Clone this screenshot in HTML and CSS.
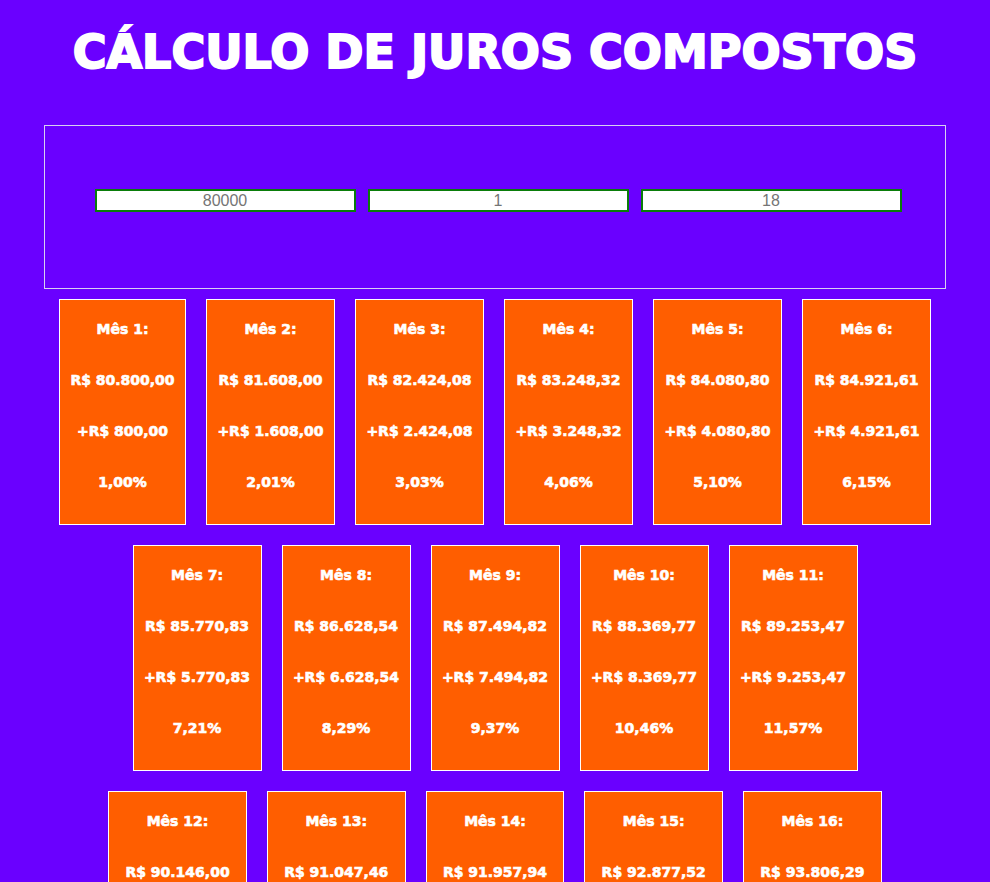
FILE: index.html
```html
<!DOCTYPE html>
<html lang="pt-BR">
<head>
<meta charset="utf-8">
<title>Cálculo de Juros Compostos</title>
<link rel="stylesheet" href="styles.css">
</head>
<body>
<h1 class="title">CÁLCULO DE JUROS COMPOSTOS</h1>
<form class="form-box">
  <input class="field" type="text" value="80000">
  <input class="field" type="text" value="1">
  <input class="field" type="text" value="18">
</form>
<div class="cards">
  <div class="card"><p>Mês 1:</p><p>R$ 80.800,00</p><p>+R$ 800,00</p><p>1,00%</p></div>
  <div class="card"><p>Mês 2:</p><p>R$ 81.608,00</p><p>+R$ 1.608,00</p><p>2,01%</p></div>
  <div class="card"><p>Mês 3:</p><p>R$ 82.424,08</p><p>+R$ 2.424,08</p><p>3,03%</p></div>
  <div class="card"><p>Mês 4:</p><p>R$ 83.248,32</p><p>+R$ 3.248,32</p><p>4,06%</p></div>
  <div class="card"><p>Mês 5:</p><p>R$ 84.080,80</p><p>+R$ 4.080,80</p><p>5,10%</p></div>
  <div class="card"><p>Mês 6:</p><p>R$ 84.921,61</p><p>+R$ 4.921,61</p><p>6,15%</p></div>
  <div class="card"><p>Mês 7:</p><p>R$ 85.770,83</p><p>+R$ 5.770,83</p><p>7,21%</p></div>
  <div class="card"><p>Mês 8:</p><p>R$ 86.628,54</p><p>+R$ 6.628,54</p><p>8,29%</p></div>
  <div class="card"><p>Mês 9:</p><p>R$ 87.494,82</p><p>+R$ 7.494,82</p><p>9,37%</p></div>
  <div class="card"><p>Mês 10:</p><p>R$ 88.369,77</p><p>+R$ 8.369,77</p><p>10,46%</p></div>
  <div class="card"><p>Mês 11:</p><p>R$ 89.253,47</p><p>+R$ 9.253,47</p><p>11,57%</p></div>
  <div class="card"><p>Mês 12:</p><p>R$ 90.146,00</p><p>+R$ 10.146,00</p><p>12,68%</p></div>
  <div class="card"><p>Mês 13:</p><p>R$ 91.047,46</p><p>+R$ 11.047,46</p><p>13,81%</p></div>
  <div class="card"><p>Mês 14:</p><p>R$ 91.957,94</p><p>+R$ 11.957,94</p><p>14,95%</p></div>
  <div class="card"><p>Mês 15:</p><p>R$ 92.877,52</p><p>+R$ 12.877,52</p><p>16,10%</p></div>
  <div class="card"><p>Mês 16:</p><p>R$ 93.806,29</p><p>+R$ 13.806,29</p><p>17,26%</p></div>
  <div class="card"><p>Mês 17:</p><p>R$ 94.744,35</p><p>+R$ 14.744,35</p><p>18,43%</p></div>
  <div class="card"><p>Mês 18:</p><p>R$ 95.691,80</p><p>+R$ 15.691,80</p><p>19,61%</p></div>
</div>
</body>
</html>
```

FILE: styles.css
```css
html, body {
  margin: 0;
  padding: 0;
}
body {
  background: #6a00ff;
  font-family: "DejaVu Sans", "Liberation Sans", sans-serif;
  color: #fff;
}
.title {
  margin: 0;
  padding-top: 24px;
  height: 101px;
  box-sizing: border-box;
  font-size: 46px;
  line-height: 56px;
  font-weight: bold;
  text-align: center;
  color: #fff;
  -webkit-text-stroke: 2px #fff;
}
.form-box {
  width: 902px;
  box-sizing: border-box;
  margin: 24px auto 0;
  border: 1px solid #d8d0f0;
  padding: 63px 0 76px 6px;
  display: flex;
  justify-content: center;
  gap: 12px;
}
.field {
  width: 261px;
  height: 23px;
  box-sizing: border-box;
  border: 2px solid #0a7d0a;
  background: #fff;
  padding: 0 2px;
  margin: 0;
  font-family: "Liberation Sans", Arial, sans-serif;
  font-size: 16px;
  color: #757575;
  text-align: center;
  outline: none;
}
.cards {
  width: 900px;
  margin: 0 auto;
  display: flex;
  flex-wrap: wrap;
  justify-content: center;
}
.card {
  margin: 10px;
  border: 1px solid #fff;
  background: #ff5e00;
  padding: 19px 10.4px 32px;
  display: flex;
  flex-direction: column;
  gap: 31px;
  font-size: 14px;
  font-weight: bold;
  text-align: center;
  -webkit-text-stroke: 0.6px #fff;
}
.card p {
  margin: 0;
  line-height: 20px;
  white-space: nowrap;
}
```
